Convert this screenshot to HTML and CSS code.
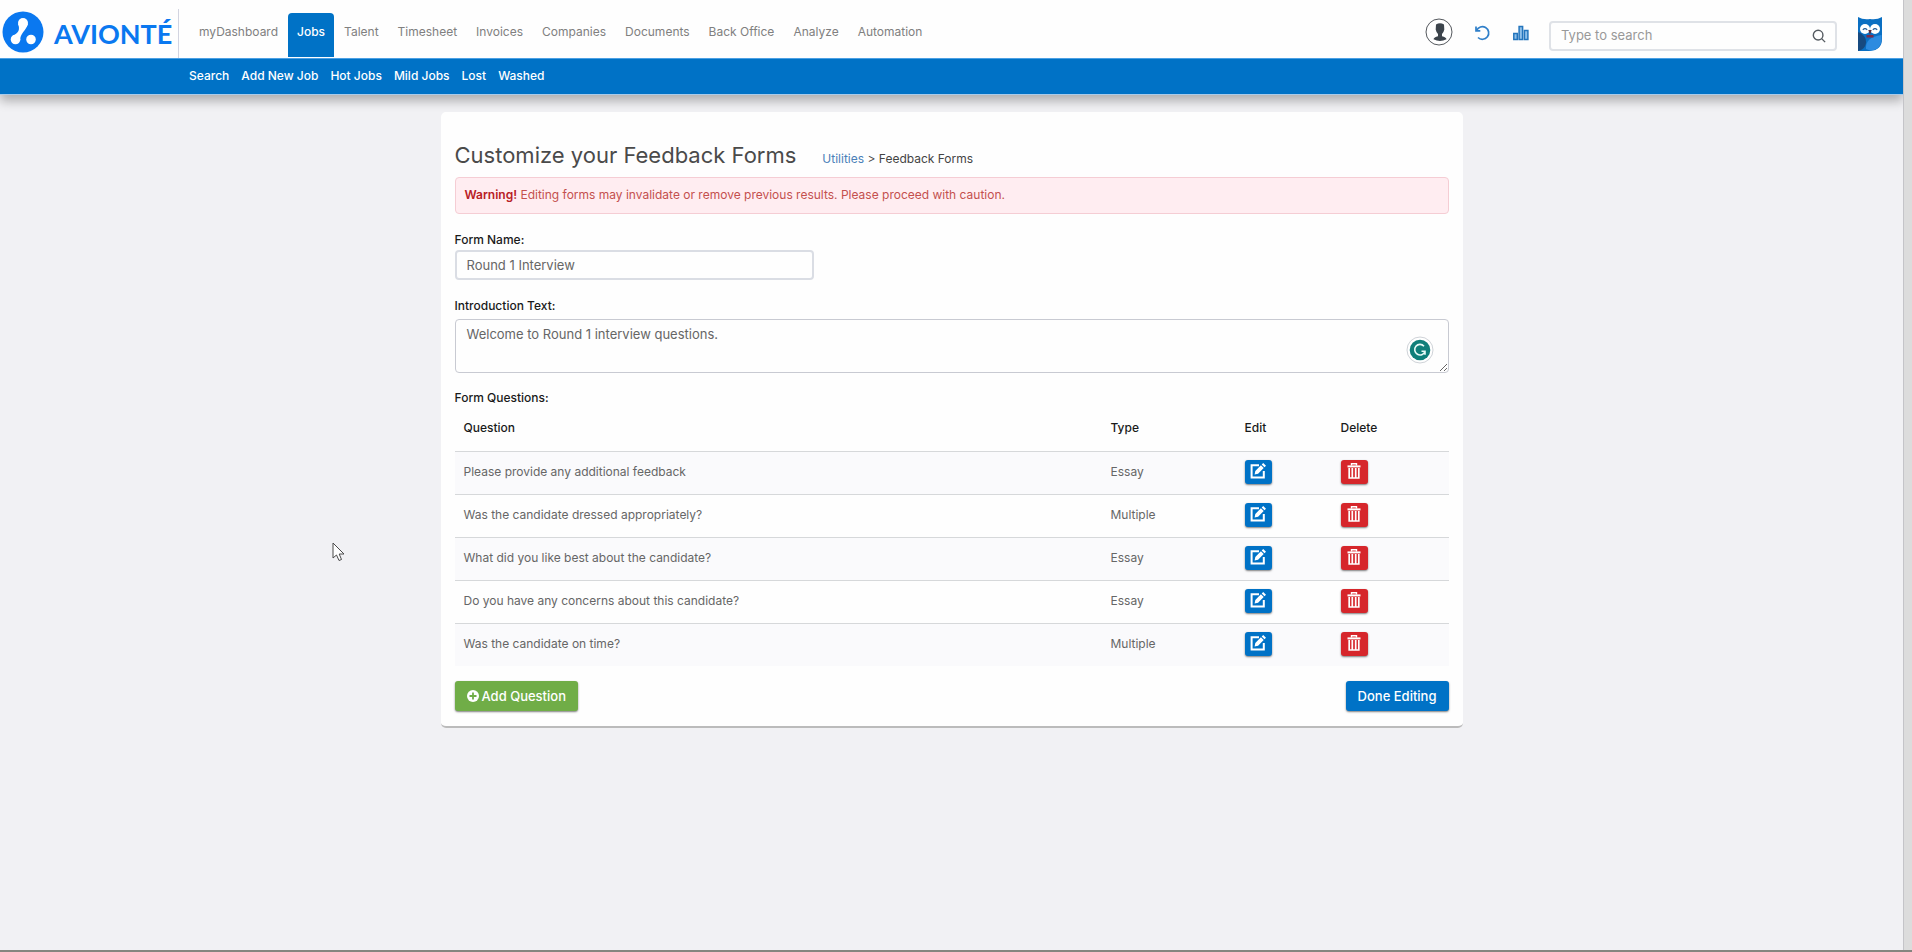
FILE: index.html
```html
<!DOCTYPE html>
<html lang="en">
<head>
<meta charset="utf-8">
<title>Customize your Feedback Forms</title>
<link rel="stylesheet" href="styles.css">
</head>
<body>
<svg class="sprite" aria-hidden="true">
  <symbol id="edit" viewBox="0 0 16 16">
    <path d="M9 2.200H1.600v12.200h12.200V8" fill="none" stroke="#fff" stroke-width="2"/>
    <path d="M4.600 11.400l.7-3.500 5.600-5.600 2.800 2.800-5.600 5.600zM11.700 1.500L13.200 0 16 2.800 14.500 4.300z" fill="#fff"/>
  </symbol>
  <symbol id="trash" viewBox="0 0 14 16">
    <path d="M4.500 2.500V.8h5v1.700" fill="none" stroke="#fff" stroke-width="1.400"/>
    <path d="M.5 2.400h13v2H.5z" fill="#fff"/>
    <path d="M2.200 5v10h9.600V5M5.300 5v9.500M8.700 5v9.500" fill="none" stroke="#fff" stroke-width="1.700"/>
  </symbol>
</svg>
<div class="app">
  <div class="page">
    <header class="header">
      <div class="topbar">
        <a class="logo" href="#">
          <svg class="logo-mark" viewBox="0 0 42 42" aria-hidden="true">
            <circle cx="21" cy="21" r="20.500" fill="#0a78f0"/>
            <circle cx="21" cy="12" r="5" fill="#fff"/>
            <circle cx="13.500" cy="28.500" r="4.800" fill="#fff"/>
            <circle cx="29" cy="28.500" r="4.800" fill="#fff"/>
            <path d="M16.200 13C18 18.500 17 22 10.500 24.800L18.200 29.500C17.500 23 24.500 19 25.800 13z" fill="#fff"/>
          </svg>
          <span class="logo-text">AVIONTÉ</span>
        </a>
        <nav class="nav">
          <a href="#">myDashboard</a>
          <a class="active" href="#">Jobs</a>
          <a href="#">Talent</a>
          <a href="#">Timesheet</a>
          <a href="#">Invoices</a>
          <a href="#">Companies</a>
          <a href="#">Documents</a>
          <a href="#">Back Office</a>
          <a href="#">Analyze</a>
          <a href="#">Automation</a>
        </nav>
        <div class="tools">
          <button class="tool" type="button" aria-label="Account">
            <svg class="user" viewBox="0 0 28 28" aria-hidden="true">
              <circle cx="14" cy="14" r="13" fill="#fff" stroke="#55595e"/>
              <path d="M11 6.500q4-2.500 8 0l.3 5q-.6 3-2.300 4.500v2.200q4 1 4.500 3-6.500 3.400-13 0 .5-2 4.500-3V16q-1.700-1.500-2.300-4.500z" fill="#3c444c"/>
            </svg>
          </button>
          <button class="tool" type="button" aria-label="Recent">
            <svg class="icon-16" viewBox="0 0 16 16" fill="none" stroke="#2f7fc9" stroke-width="1.700" aria-hidden="true">
              <path d="M1 1.500v4.300h4.300M1.600 5.500A6.300 6.300 0 1 1 3 12.500"/>
            </svg>
          </button>
          <button class="tool" type="button" aria-label="Reports">
            <svg class="icon-16" viewBox="0 0 16 16" fill="#8fc0ea" stroke="#2475bd" stroke-width="1.500" aria-hidden="true">
              <rect x=".8" y="8.500" width="3.500" height="6"/><rect x="6.100" y="1.500" width="3.500" height="13"/><rect x="11.400" y="5.500" width="3.500" height="9"/>
            </svg>
          </button>
          <form class="search">
            <input type="search" placeholder="Type to search" aria-label="Search">
            <button type="button" aria-label="Run search">
              <svg viewBox="0 0 16 16" fill="none" stroke="#555b61" stroke-width="1.600" aria-hidden="true"><circle cx="7" cy="7" r="5.500"/><path d="M11 11l4 4"/></svg>
            </button>
          </form>
          <svg class="owl" viewBox="0 0 24 34" aria-hidden="true">
            <path d="M0 0q5 3 12 2Q19 3 24 0v22q0 11-12 12H0z" fill="#0a6fc2"/>
            <path d="M8 32Q7 20 23.500 18v5Q23 33 12 33.500z" fill="#2c8be0"/>
            <path d="M0 15q8 3 8 10 0 5-4 7.500L0 34z" fill="#174a80"/>
            <circle cx="7" cy="12" r="5" fill="#fff"/><circle cx="17" cy="12" r="5" fill="#fff"/>
            <path d="M4.800 12.800q2.200-2.200 4.400 0M14.800 12.800q2.200-2.200 4.400 0" fill="none" stroke="#1c5a96" stroke-width="1.100"/>
            <path d="M10.300 13h3.400L12 18z" fill="#5a2a3a"/><path d="M8.500 18h7v2.500h-7z" fill="#7a2c4c"/>
          </svg>
        </div>
      </div>
      <nav class="subnav">
        <a href="#">Search</a>
        <a href="#">Add New Job</a>
        <a href="#">Hot Jobs</a>
        <a href="#">Mild Jobs</a>
        <a href="#">Lost</a>
        <a href="#">Washed</a>
      </nav>
    </header>
    <main class="card">
      <div class="heading">
        <h1>Customize your Feedback Forms</h1>
        <p class="crumbs"><a href="#">Utilities</a> &gt; Feedback Forms</p>
      </div>
      <p class="alert" role="alert"><strong>Warning!</strong> Editing forms may invalidate or remove previous results. Please proceed with caution.</p>
      <div class="field">
        <label for="form-name">Form Name:</label>
        <input class="name" id="form-name" type="text" value="Round 1 Interview">
      </div>
      <div class="field">
        <label for="intro">Introduction Text:</label>
        <div class="intro-box">
          <textarea id="intro">Welcome to Round 1 interview questions.</textarea>
          <svg class="checker" viewBox="0 0 28 28" aria-hidden="true">
            <circle cx="14" cy="14" r="13" fill="#fff" stroke="#cfd3d8"/>
            <circle cx="14" cy="14" r="10.300" fill="#0f7f7a"/>
            <path d="M18 10.200A5.300 5.300 0 1 0 19 15.500M15.500 15.200h3.500v3.500" fill="none" stroke="#e8fbf8" stroke-width="1.600"/>
          </svg>
        </div>
      </div>
      <table class="questions">
        <caption>Form Questions:</caption>
        <thead><tr><th>Question</th><th class="type">Type</th><th class="edit">Edit</th><th class="delete">Delete</th></tr></thead>
        <tbody>
          <tr><td>Please provide any additional feedback</td><td>Essay</td><td><button class="btn small blue" type="button" aria-label="Edit"><svg><use href="#edit"/></svg></button></td><td><button class="btn small red" type="button" aria-label="Delete"><svg><use href="#trash"/></svg></button></td></tr>
          <tr><td>Was the candidate dressed appropriately?</td><td>Multiple</td><td><button class="btn small blue" type="button" aria-label="Edit"><svg><use href="#edit"/></svg></button></td><td><button class="btn small red" type="button" aria-label="Delete"><svg><use href="#trash"/></svg></button></td></tr>
          <tr><td>What did you like best about the candidate?</td><td>Essay</td><td><button class="btn small blue" type="button" aria-label="Edit"><svg><use href="#edit"/></svg></button></td><td><button class="btn small red" type="button" aria-label="Delete"><svg><use href="#trash"/></svg></button></td></tr>
          <tr><td>Do you have any concerns about this candidate?</td><td>Essay</td><td><button class="btn small blue" type="button" aria-label="Edit"><svg><use href="#edit"/></svg></button></td><td><button class="btn small red" type="button" aria-label="Delete"><svg><use href="#trash"/></svg></button></td></tr>
          <tr><td>Was the candidate on time?</td><td>Multiple</td><td><button class="btn small blue" type="button" aria-label="Edit"><svg><use href="#edit"/></svg></button></td><td><button class="btn small red" type="button" aria-label="Delete"><svg><use href="#trash"/></svg></button></td></tr>
        </tbody>
      </table>
      <div class="actions">
        <button class="btn large green" type="button">
          <svg viewBox="0 0 12 12" aria-hidden="true"><circle cx="6" cy="6" r="6" fill="#fff"/><path d="M6 2.500v7M2.500 6h7" stroke="#70ad47" stroke-width="1.800"/></svg>
          Add Question
        </button>
        <button class="btn large blue" type="button">Done Editing</button>
      </div>
    </main>
  </div>
  <div class="gutter"></div>
  <svg class="pointer" viewBox="0 0 14 20" aria-hidden="true"><path d="M1 1v15l3.500-3 2.500 5.500 2.500-1L7.200 12H12z" fill="#fff" stroke="#4a4a4a"/></svg>
</div>
</body>
</html>
```
FILE: styles.css
```css
* { box-sizing: border-box; }

body {
  margin: 0;
  background: #f1f1f4;
  color: #666;
  font-family: Inter, "Open Sans", sans-serif;
  font-size: 12px;
  line-height: 18px;
}

a { color: inherit; text-decoration: none; }
button, input, textarea { font: inherit; color: inherit; }
input, textarea { font-size: 13px; }
button { cursor: pointer; }
h1, p { margin: 0; }

.sprite { position: absolute; width: 0; height: 0; }

.app {
  position: relative;
  display: flex;
  min-height: 100vh;
  border-bottom: 2px solid #85857f;
}
.page { flex: 1; min-width: 0; }
.gutter {
  width: 9px;
  background: #dcdcdc;
  border-left: 1px solid #c4c4c8;
}

.header { box-shadow: 0 6px 10px rgba(0, 0, 0, .28); }
.topbar {
  display: flex;
  height: 58px;
  background: #fefefe;
}
.logo {
  display: flex;
  align-items: center;
  gap: 10px;
  width: 179px;
  margin-top: 9px;
  padding: 0 0 3px 2px;
  border-right: 1px solid #d2d4e0;
  color: #0a78f0;
}
.logo-mark { width: 42px; height: 42px; }
.logo-text { padding-top: 3px; font: bold 27px/32px Lato, sans-serif; }

.nav { display: flex; gap: 1px; margin: 13px 0 1px 11px; }
.nav a {
  padding: 10px 9px 0;
  color: #808080;
}
.nav .active {
  background: #0072c6;
  border-radius: 4px 4px 0 0;
  color: #fff;
  font-weight: 500;
}

.tools {
  display: flex;
  align-items: center;
  margin-left: auto;
  padding: 6px 21px 0 0;
}
.tool {
  display: flex;
  margin: 0 22px 0 0;
  padding: 0;
  border: 0;
  background: none;
}
.user { width: 28px; height: 28px; }
.icon-16 { width: 16px; height: 16px; margin-top: 2px; }
.search {
  display: flex;
  width: 288px;
  height: 30px;
  margin: 7px 21px 0 -2px;
  border: 2px solid #dfe2e7;
  border-radius: 4px;
}
.search input {
  flex: 1;
  min-width: 0;
  padding: 0 10px 1px;
  border: 0;
  background: none;
}
.search input::placeholder { color: #999; }
.search button {
  display: flex;
  align-items: center;
  padding: 0 9px;
  border: 0;
  background: none;
}
.search svg { width: 14px; height: 14px; }
.owl { width: 24px; height: 34px; margin-top: 4px; }

.subnav {
  display: flex;
  gap: 12px;
  height: 37px;
  padding: 8px 0 0 189px;
  border-top: 1px solid #4ba0e4;
  border-bottom: 1px solid #a9cbea;
  background: #0072c6;
  color: #fff;
  font-weight: 500;
}

.card {
  max-width: 1022px;
  margin: 17px auto 0;
  padding: 28px 14px 15px;
  border-bottom: 2px solid #bbb;
  border-radius: 5px;
  background: #fefefe;
}
.heading { display: flex; align-items: baseline; gap: 26px; }
h1 { color: #4a4a4a; font-size: 22px; font-weight: 400; line-height: 30px; }
.crumbs { color: #444; }
.crumbs a { color: #4a80b8; }

.alert {
  margin-top: 7px;
  padding: 8px 9px 9px;
  border: 1px solid #f5cdd4;
  border-radius: 4px;
  background: #ffedf1;
  color: #c4504e;
}
.alert strong { color: #b82025; font-weight: 600; }

.field { margin-top: 17px; }
label, caption {
  color: #1a1a1a;
  font-weight: 500;
}
label { display: block; }
.name {
  display: block;
  width: 359px;
  height: 30px;
  margin-top: 1px;
  padding: 0 10px 1px;
  border: 2px solid #dadde4;
  border-radius: 4px;
  background: none;
}
.intro-box { position: relative; margin-top: 4px; }
textarea {
  display: block;
  width: 100%;
  height: 54px;
  padding: 5px 11px;
  border: 1px solid #c8cad2;
  border-radius: 4px;
  background: none;
}
.checker { position: absolute; right: 15px; bottom: 9px; width: 28px; height: 28px; }

.questions {
  width: 100%;
  margin-top: 16px;
  border-collapse: collapse;
  table-layout: fixed;
  text-align: left;
}
caption { text-align: left; }
th { height: 44px; padding: 0 9px 2px; color: #1a1a1a; font-weight: 500; }
td { height: 43px; padding: 0 9px 2px; border-top: 1px solid #d6d8da; }
tbody tr:nth-child(odd) { background: #fafafc; }
.type { width: 134px; }
.edit { width: 96px; }
.delete { width: 117px; }

.btn {
  display: flex;
  align-items: center;
  justify-content: center;
  border: 0;
  border-radius: 3px;
  box-shadow: 0 1px 2px rgba(0, 0, 0, .5);
  color: #fff;
}
.small { width: 27px; height: 24px; padding: 0 0 2px; }
.small svg { width: 16px; height: 16px; }
.blue { background: #0072c6; }
.red { background: #d6262b; }
.green { background: #70ad47; }
.large { gap: 3px; height: 30px; padding: 0 12px; font-size: 13px; font-weight: 500; }
.large svg { width: 12px; height: 12px; }
.actions { display: flex; justify-content: space-between; margin-top: 15px; }

.pointer { position: absolute; left: 332px; top: 542px; width: 14px; height: 20px; }
```
